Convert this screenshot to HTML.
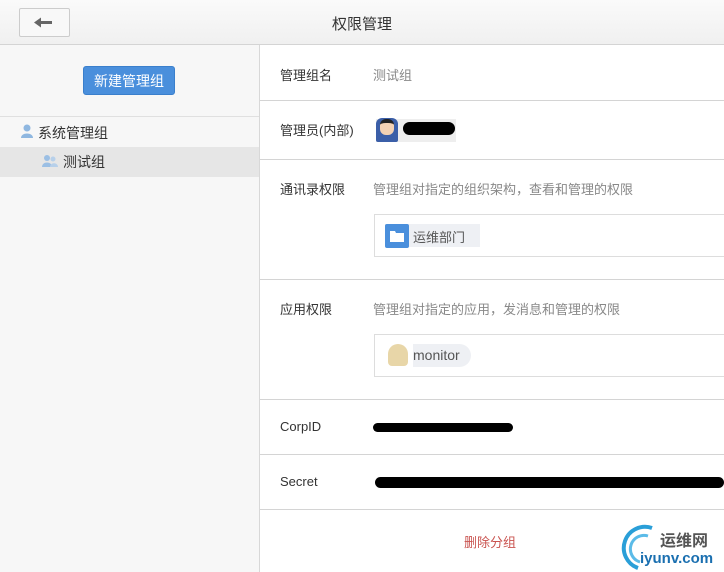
<!DOCTYPE html>
<html><head><meta charset="utf-8"><style>
body{margin:0;width:724px;height:572px;overflow:hidden;font-family:"Liberation Sans","Noto Sans CJK SC",sans-serif;font-size:13px;color:#333;position:relative;background:#fff}
.hdr{position:absolute;left:0;top:0;width:724px;height:45px;background:linear-gradient(#fafafa,#f0f0f0);border-bottom:1px solid #d4d4d4;box-sizing:border-box}
.hdr .t{position:absolute;left:0;right:0;top:13px;text-align:center;font-size:15px;color:#333}
.back{position:absolute;left:19px;top:8px;width:51px;height:29px;box-sizing:border-box;border:1px solid #ccc;border-radius:2px;background:#f8f8f8}
.left{position:absolute;left:0;top:45px;width:259px;height:527px;background:#f7f7f7;border-right:1px solid #d8d8d8}
.btn{position:absolute;left:83px;top:21px;width:92px;height:29px;background:#4a8fdc;border:1px solid #3a7fcc;border-radius:3px;color:#fff;text-align:center;line-height:28px;font-size:14px;box-sizing:border-box}
.lline{position:absolute;left:0;top:71px;width:259px;height:1px;background:#e0e0e0}
.row{position:absolute;left:260px;width:464px;border-bottom:1px solid #d4d4d4;box-sizing:border-box}
.lab{position:absolute;left:20px;font-size:13px;color:#333}
.val{position:absolute;left:113px;color:#888}
.box{position:absolute;left:114px;width:360px;border:1px solid #ddd;box-sizing:border-box;height:43px}
.blob{position:absolute;background:#000;border-radius:8px}
</style></head><body>
<div class="hdr"><div class="back"><svg width="49" height="27"><path d="M19 13.5h13" stroke="#666" stroke-width="3"/><path d="M14 13.5l7-5v10z" fill="#666"/></svg></div><div class="t">权限管理</div></div>
<div class="left">
<div class="btn">新建管理组</div>
<div class="lline"></div>
<svg style="position:absolute;left:20px;top:79px" width="14" height="14"><circle cx="7" cy="4" r="3.5" fill="#8fb7e0"/><path d="M1 14c0-6 12-6 12 0z" fill="#8fb7e0"/></svg>
<div style="position:absolute;left:38px;top:78px;font-size:14px">系统管理组</div>
<div style="position:absolute;left:0;top:102px;width:259px;height:30px;background:#e6e6e6"></div>
<svg style="position:absolute;left:41px;top:109px" width="18" height="14"><circle cx="6" cy="4" r="3" fill="#9bbfe4"/><path d="M1 13c0-6 10-6 10 0z" fill="#9bbfe4"/><circle cx="12" cy="5" r="2.5" fill="#b7d0ea"/><path d="M9 13c0-5 8-5 8 0z" fill="#b7d0ea"/></svg>
<div style="position:absolute;left:63px;top:107px;font-size:14px">测试组</div>
</div>
<div class="row" style="top:45px;height:56px"><div class="lab" style="top:20px">管理组名</div><div class="val" style="top:20px">测试组</div></div>
<div class="row" style="top:101px;height:59px"><div class="lab" style="top:19px">管理员(内部)</div>
<div style="position:absolute;left:116px;top:18px;width:80px;height:23px;background:#eee"></div>
<div style="position:absolute;left:116px;top:17px;width:22px;height:24px;background:#3b5fa8;border-radius:6px 6px 2px 2px"></div>
<div style="position:absolute;left:120px;top:18px;width:14px;height:12px;background:#f3d2b4;border-radius:6px;border-top:4px solid #222"></div>
<div class="blob" style="left:143px;top:21px;width:52px;height:13px"></div></div>
<div class="row" style="top:160px;height:120px"><div class="lab" style="top:19px">通讯录权限</div><div class="val" style="top:19px">管理组对指定的组织架构，查看和管理的权限</div>
<div class="box" style="top:54px"><div style="position:absolute;left:10px;top:9px;width:95px;height:23px;background:#eef0f4"></div><div style="position:absolute;left:10px;top:9px;width:24px;height:24px;background:#4a8fdc;border-radius:2px"></div><svg style="position:absolute;left:15px;top:15px" width="14" height="12"><path d="M0 1h5l1 2h8v9H0z" fill="#fff"/></svg><div style="position:absolute;left:38px;top:12px;color:#555">运维部门</div></div></div>
<div class="row" style="top:280px;height:120px"><div class="lab" style="top:19px">应用权限</div><div class="val" style="top:19px">管理组对指定的应用，发消息和管理的权限</div>
<div class="box" style="top:54px"><div style="position:absolute;left:38px;top:9px;width:58px;height:23px;background:#eef0f4;border-radius:0 12px 12px 0"></div><div style="position:absolute;left:13px;top:9px;width:20px;height:22px;background:#e8d6a8;border-radius:10px 10px 4px 4px"></div><div style="position:absolute;left:38px;top:12px;color:#555;font-size:14px">monitor</div></div></div>
<div class="row" style="top:400px;height:55px"><div class="lab" style="top:19px">CorpID</div><div class="blob" style="left:113px;top:23px;width:140px;height:9px"></div></div>
<div class="row" style="top:455px;height:55px"><div class="lab" style="top:19px">Secret</div><div class="blob" style="left:115px;top:22px;width:349px;height:11px;border-radius:7px"></div></div>
<div style="position:absolute;left:464px;top:532px;color:#c9534f;font-size:13px">删除分组</div>
<svg style="position:absolute;left:618px;top:524px" width="40" height="46"><path d="M34 4A18 18 0 1 0 20 44" fill="none" stroke="#2a9fd8" stroke-width="4"/><path d="M30 12A12 12 0 1 0 22 38" fill="none" stroke="#5bbbe8" stroke-width="3"/></svg>
<div style="position:absolute;left:660px;top:527px;font-size:16px;color:#555;font-weight:bold">运维网</div>
<div style="position:absolute;left:640px;top:550px;font-size:15px;color:#1a6fb0;font-weight:bold">iyunv.com</div>
</body></html>
